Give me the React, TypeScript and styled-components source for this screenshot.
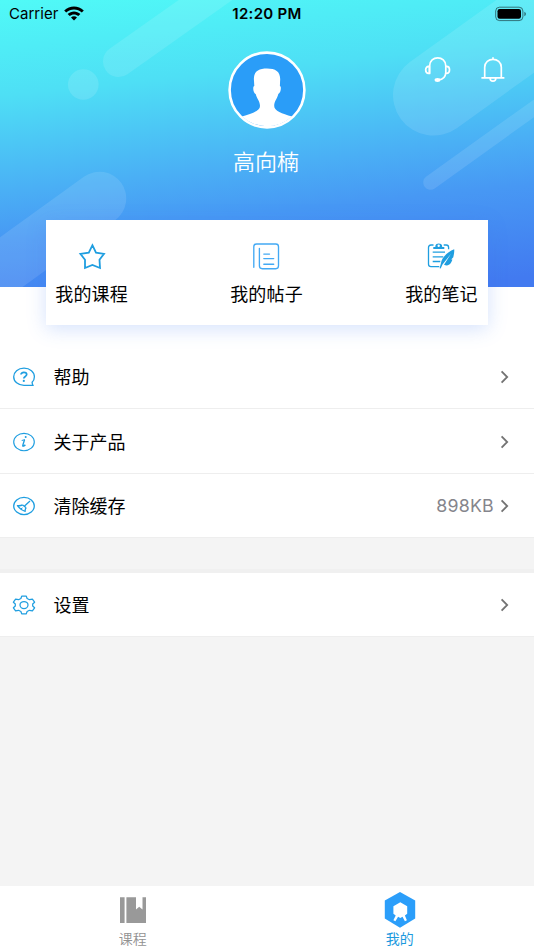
import React from "react";
import styled, { createGlobalStyle } from "styled-components";

const GlobalStyle = createGlobalStyle`
  * { box-sizing: border-box; }
  body {
    margin: 0;
    background: #f4f4f4;
    font-family: Inter, "Noto Sans CJK SC", sans-serif;
    color: #000;
  }
`;

const Screen = styled.div`
  display: flex;
  flex-direction: column;
  width: 534px;
  height: 950px;
  overflow: hidden;
  background: #f4f4f4;
`;

const Header = styled.header`
  position: relative;
  flex: none;
  height: 286.5px;
  background: linear-gradient(174deg, #50faf7 0%, #4edff5 28%, #4aaff5 56%, #4798f4 70%, #427af0 97%);
`;

const Backdrop = styled.svg`
  position: absolute;
  inset: 0;
`;

const StatusBar = styled.div`
  position: relative;
  display: grid;
  grid-template-columns: 1fr auto 1fr;
  align-items: center;
  height: 27px;
  padding: 0 7px 0 9px;
`;

const Carrier = styled.div`
  display: flex;
  align-items: center;
  gap: 6px;
  font-size: 15px;
  letter-spacing: 0.02px;
`;

const Clock = styled.div`
  margin-right: 2px;
  font-size: 15px;
  font-weight: 600;
  letter-spacing: 0.3px;
`;

const BatterySlot = styled.div`
  display: flex;
  justify-content: flex-end;
`;

const Profile = styled.div`
  position: relative;
  display: flex;
  flex-direction: column;
  align-items: center;
  padding-top: 23.5px;
`;

const UserName = styled.div`
  margin: 15.5px 2px 0 0;
  font: 350 22px/33px "Noto Sans CJK SC", sans-serif;
  color: #fff;
`;

const HeaderActions = styled.div`
  position: absolute;
  top: 29px;
  right: 28px;
  display: flex;
  gap: 28px;
`;

const Body = styled.main`
  flex: none;
  background: #fff;
`;

const Card = styled.section`
  position: relative;
  display: flex;
  justify-content: space-between;
  width: 442.5px;
  height: 105.5px;
  margin: -67px auto 20px;
  padding: 22.5px 10.5px 0 9.5px;
  background: #fff;
  box-shadow: 0 4px 18px rgba(66, 122, 240, 0.22);
`;

const CardItem = styled.div`
  display: flex;
  flex-direction: column;
  align-items: center;
  gap: 9.5px;
  font: 400 18px/27px "Noto Sans CJK SC", sans-serif;
  letter-spacing: 0.15px;
`;

const Row = styled.div<{ $line?: number }>`
  display: flex;
  align-items: center;
  height: 64.4px;
  padding: 1px 24px 0 12px;
  background: #fff;
  border-bottom: ${(p) => p.$line ?? 1}px solid #eeeeee;
`;

const RowLabel = styled.div`
  flex: 1;
  margin: -2px 0 0 17.4px;
  font: 400 18px/26px "Noto Sans CJK SC", sans-serif;
`;

const RowValue = styled.div`
  margin-right: 6px;
  font-size: 17.8px;
  letter-spacing: 0.25px;
  color: #85858c;
`;

const Gap = styled.div`
  flex: none;
  height: 34.5px;
  background: linear-gradient(#f4f4f4 88%, #f0f0f0 88%);
`;

const TabBar = styled.nav`
  display: grid;
  grid-template-columns: 1fr 1fr;
  height: 64px;
  margin-top: auto;
  background: #fff;
`;

const Tab = styled.div<{ $active?: boolean }>`
  display: flex;
  flex-direction: column;
  align-items: center;
  padding: 5px 1.5px 0 0;
  font: ${(p) => (p.$active ? 400 : 350)} 14px/20px "Noto Sans CJK SC", sans-serif;
  color: ${(p) => (p.$active ? "#1c9ade" : "#929292")};
`;

const TabIcon = styled.svg`
  flex: none;
`;

const BLUE = "#1f9ee0";

const Wifi = () => (
  <svg width="20" height="15" viewBox="0 0 20 15">
    <path d="M.2 4.5C5.7-1 14.3-1 19.8 4.5L17.8 6.6C13.4 2.3 6.6 2.3 2.2 6.6ZM3.6 8C7.2 4.5 12.8 4.5 16.4 8L14.3 10.1C11.9 7.8 8.1 7.8 5.7 10.1ZM7 11.4C8.7 9.8 11.3 9.8 13 11.4L10 14.5Z" />
  </svg>
);

const Battery = () => (
  <svg width="32" height="16" viewBox="0 0 32 16">
    <rect x=".7" y="1.2" width="27.2" height="13.4" rx="3.8" fill="none" stroke="#000" strokeOpacity=".5" />
    <rect x="2.5" y="3" width="23.5" height="9.8" rx="2.2" />
    <path d="M29.3 5.8C31.5 6.6 31.5 9.4 29.3 10.2Z" opacity=".5" />
  </svg>
);

const Avatar = () => (
  <svg width="78" height="78" viewBox="0 0 78 78">
    <circle cx="39" cy="39" r="37.6" fill="#2a9df8" />
    <path
      fill="#fff"
      d="M39 17.5C30 17.5 25 21 26 30L26.3 35C24.5 35 25 42 27.7 43C28.9 48 32 50 32 55C32 60 24 62.5 14 65.5A37 37 0 0 0 64 65.5C54 62.5 46.2 60 46.2 55C46.2 50 49.2 48 50.3 43C53 42 53.6 35 51.9 35L52.1 30C53 21 48 17.5 39 17.5Z"
    />
    <circle cx="39" cy="39" r="37.4" fill="none" stroke="#fff" strokeWidth="2.6" />
  </svg>
);

const Headset = () => (
  <svg width="27" height="28" viewBox="0 0 27 28" fill="none" stroke="#fff" strokeWidth="1.7">
    <path d="M5.6 17.8V10C5.6-.9 21.8-.9 21.8 10V16.5C21.5 21 18.5 23.7 14.5 23.9" />
    <path d="M5.4 10.3H4.6C.7 10.3.7 17.4 4.6 17.4H5.4ZM21.9 10.3H22.6C26.5 10.3 26.5 17.4 22.6 17.4H21.9" />
    <ellipse cx="13.5" cy="24" rx="2.9" ry="1.9" fill="#fff" stroke="none" />
  </svg>
);

const Bell = () => (
  <svg width="27" height="28" viewBox="0 0 27 28" fill="none" stroke="#fff" strokeWidth="1.7">
    <path d="M5.7 21.9V11.2C5.7 .7 22.3 .7 22.3 11.2V21.9M2.4 21.9H25.4M14 3.4V1.3M11.1 22.2C11.2 26.2 16.7 26.2 16.8 22.2" />
  </svg>
);

const Star = () => (
  <svg width="28" height="28" viewBox="0 0 28 28" fill="none" stroke={BLUE} strokeWidth="1.8">
    <path d="M14.4 3.2L18 10.6L26 11.8L21.5 17.8L22 26L14.4 23L7 26L7 17.8L2.4 11.8L10.8 10.6Z" />
  </svg>
);

const Posts = () => (
  <svg width="28" height="28" viewBox="0 0 28 28" fill="none" stroke="#43a9f4" strokeWidth="1.35" strokeLinecap="round">
    <path d="M1.8 25.2V4.8Q1.8 2 4.6 2H23.8Q26.5 2 26.5 4.7V23.8Q26.5 26.7 23.8 26.7H10.3Q7.4 26.7 7.4 23.8V6.5M11.8 12.1H17.5M11.8 16.6H21.7M11.8 22.2H21.7" />
  </svg>
);

const Notes = () => (
  <svg width="28" height="28" viewBox="0 0 28 28" fill="none" stroke={BLUE} strokeWidth="1.3">
    <path d="M6.5 3H4Q1.5 3 1.5 5.5V22.3Q1.5 24.7 4 24.7H12.3M16.7 3H19.3Q21.6 3 21.6 5.5V7.2" />
    <path d="M5.7 10.2H18M5.7 14.8H16.3M5.7 19.5H13.3" />
    <path fillRule="evenodd" fill={BLUE} stroke="none" d="M8.5 3.3Q8.8 1.4 11.7 1.4Q14.7 1.4 15 3.3L15.2 5H17.3V7.1H6.3V5H8.3ZM11.7 2.6A1.2 1.2 0 1 0 11.7 5A1.2 1.2 0 1 0 11.7 2.6Z" />
    <path fill={BLUE} stroke="none" d="M27.2 7.3C19.5 10.3 14.5 16.5 14 21L12.6 26.2L13.7 26.5L15.5 22.5L24 11.8L17 22.8C22 25.3 24.4 20.8 25.4 17.6L24.2 17.5L26.3 15.3C26.9 12.4 27.5 9.7 27.2 7.3Z" />
  </svg>
);

const Help = () => (
  <svg width="24" height="22" viewBox="0 0 24 22" fill="none" stroke={BLUE} strokeWidth="1.3">
    <path d="M20.2 19.4H12C6 19.4 1.7 15.5 1.7 10.7C1.7 6 6 2.1 12 2.1C18 2.1 22.4 6 22.4 10.7C22.4 13 21.6 14.8 20.1 16.3Q20.2 18 20.9 19.4Z" />
    <path d="M9 8.6C9 5.7 14.7 5.8 14.7 8.6C14.7 10.6 11.8 10.4 11.8 12.6" strokeWidth="1.7" />
    <circle cx="11.8" cy="14.9" r="1.1" fill={BLUE} stroke="none" />
  </svg>
);

const Info = () => (
  <svg width="24" height="22" viewBox="0 0 24 22" fill="none" stroke={BLUE} strokeWidth="1.15">
    <ellipse cx="12" cy="11" rx="10.3" ry="8.7" />
    <path d="M9.7 9.5Q11.3 9.2 12.8 8.5" strokeWidth="1" />
    <path d="M12.5 8.7L10.8 14.4Q10.5 16.2 13.4 13.9" strokeWidth="1.4" />
    <circle cx="13.7" cy="6" r="1" fill={BLUE} stroke="none" />
  </svg>
);

const Broom = () => (
  <svg width="24" height="22" viewBox="0 0 24 22" fill="none" stroke={BLUE} strokeWidth="1.3" strokeLinejoin="round">
    <ellipse cx="12" cy="11" rx="10.3" ry="8.6" />
    <path d="M18 6L12.3 11.2M10.6 9.9L14.2 12.8M10.6 9.9Q8.7 11 5.4 10.7Q8.8 15.1 13.2 16.4Q12.9 14.2 14.2 12.8" />
    <path d="M8.8 13.9L10.5 12.9" strokeWidth="1" />
  </svg>
);

const Gear = () => (
  <svg width="24" height="22" viewBox="0 0 24 22" fill="none" stroke={BLUE} strokeWidth="1.25" strokeLinejoin="round">
    <path d="M9.7 2.1H14.3L15.1 4.5L17.5 5.7L20.4 5.2L22.6 8.2L20.7 10V12L22.6 13.8L20.4 16.8L17.5 16.3L15.1 17.5L14.3 19.9H9.7L8.9 17.5L6.5 16.3L3.6 16.8L1.4 13.8L3.3 12V10L1.4 8.2L3.6 5.2L6.5 5.7L8.9 4.5Z" />
    <ellipse cx="12" cy="11" rx="4" ry="3.5" />
  </svg>
);

const Chevron = () => (
  <svg width="10" height="14" viewBox="0 0 10 14" fill="none" stroke="#737373" strokeWidth="1.8">
    <path d="M1.6 1.3L7.2 7L1.6 12.7" />
  </svg>
);

const rows = [
  { label: "帮助", icon: <Help />, line: 1 },
  { label: "关于产品", icon: <Info />, line: 1.5 },
  { label: "清除缓存", icon: <Broom />, value: "898KB", line: 1 },
];

export default function App() {
  return (
    <Screen>
      <GlobalStyle />
      <Header>
        <Backdrop width="534" height="286.5" viewBox="0 0 534 286.5" fill="none" stroke="#fff" strokeLinecap="round" strokeOpacity=".11">
          <path d="M118.5 61.5L320 -81" strokeWidth="31" />
          <circle cx="83.3" cy="84.5" r="15.3" fill="#fff" fillOpacity=".12" stroke="none" />
          <path d="M433.5 95L620 -39" strokeWidth="81" />
          <path d="M430.5 182.5L600 61" strokeWidth="14.5" />
          <path d="M99.5 198.5L-80 328" strokeWidth="53.5" />
        </Backdrop>
        <StatusBar>
          <Carrier>Carrier <Wifi /></Carrier>
          <Clock>12:20 PM</Clock>
          <BatterySlot><Battery /></BatterySlot>
        </StatusBar>
        <Profile>
          <Avatar />
          <UserName>高向楠</UserName>
          <HeaderActions><Headset /><Bell /></HeaderActions>
        </Profile>
      </Header>
      <Body>
        <Card>
          <CardItem><Star />我的课程</CardItem>
          <CardItem><Posts />我的帖子</CardItem>
          <CardItem><Notes />我的笔记</CardItem>
        </Card>
        {rows.map((r) => (
          <Row key={r.label} $line={r.line}>
            {r.icon}
            <RowLabel>{r.label}</RowLabel>
            {r.value && <RowValue>{r.value}</RowValue>}
            <Chevron />
          </Row>
        ))}
      </Body>
      <Gap />
      <Row>
        <Gear />
        <RowLabel>设置</RowLabel>
        <Chevron />
      </Row>
      <TabBar>
        <Tab>
          <TabIcon width="36" height="37" viewBox="0 0 36 37">
            <path fill="#999" d="M5 6.3H9.6V32H5ZM11.4 6.3H21V18.5L24.2 15.7L27.5 18.5V6.3H31V32H11.4Z" />
          </TabIcon>
          课程
        </Tab>
        <Tab $active>
          <TabIcon width="36" height="37" viewBox="0 0 36 37">
            <path fill="#2b9efa" d="M18 1L33.2 9.5V27.5L18 36.7L2.8 27.5V9.5Z" />
            <path fill="#fff" d="M18.3 11.2L25.2 15.2V22.7L22.9 24.4L24.9 29.3L22.9 30.3L20.5 25.7L18.3 27L16.1 25.7L13.4 30.3L11.4 29.3L13.7 24.4L11.4 22.7V15.2Z" />
          </TabIcon>
          我的
        </Tab>
      </TabBar>
    </Screen>
  );
}
